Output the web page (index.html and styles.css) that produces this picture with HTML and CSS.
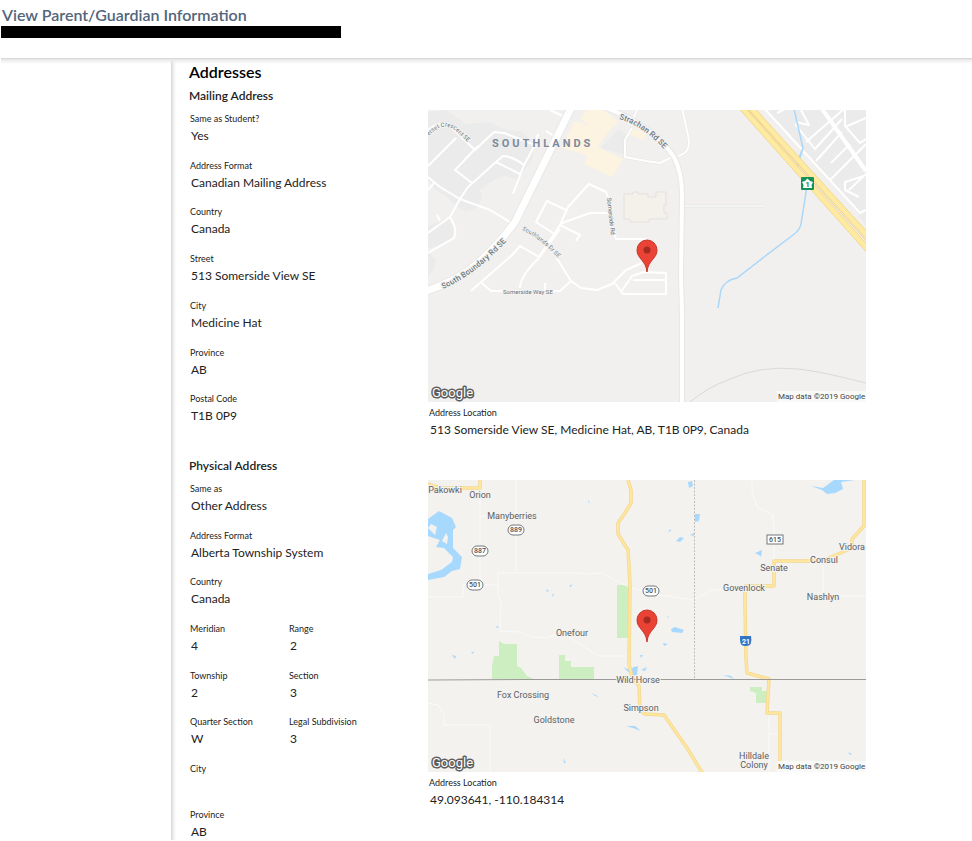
FILE: index.html
```html
<!DOCTYPE html>
<html lang="en">
<head>
<meta charset="utf-8">
<meta name="viewport" content="width=device-width, initial-scale=1">
<title>View Parent/Guardian Information</title>
<link rel="stylesheet" href="styles.css">
</head>
<body>
<header class="page-header">
  <h1>View Parent/Guardian Information</h1>
  <div class="redacted"></div>
</header>
<div class="workspace">
  <aside class="sidebar"></aside>
  <main class="content">
    <h2>Addresses</h2>

    <section class="address">
      <h3>Mailing Address</h3>
      <div class="address-body">
        <dl class="fields mailing">
          <div><dt>Same as Student?</dt><dd>Yes</dd></div>
          <div><dt>Address Format</dt><dd>Canadian Mailing Address</dd></div>
          <div><dt>Country</dt><dd>Canada</dd></div>
          <div><dt>Street</dt><dd>513 Somerside View SE</dd></div>
          <div><dt>City</dt><dd>Medicine Hat</dd></div>
          <div><dt>Province</dt><dd>AB</dd></div>
          <div><dt>Postal Code</dt><dd>T1B 0P9</dd></div>
        </dl>
        <div class="location">
          <svg class="map" viewBox="0 0 438 292" role="img" aria-label="Map of mailing address">
            <defs>
              <path id="strachan" d="M191 9Q217 16 242 46"/>
              <path id="boundary" d="M15 179Q50 164 88 121"/>
              <path id="crescent" d="M1 26Q14 11 27 20L52 44"/>
              <path id="southlands" d="M94 120Q112 128 132 150"/>
            </defs>
            <rect width="438" height="292" fill="#f1f0ee"/>
            <g fill="#ebebeb">
              <path d="M0 2L18 0L38 14L62 12L72 18L95 22L107 35L104 50L98 58L90 70L78 66L66 70L52 80L54 88L48 98L38 102L28 96L20 88L8 80L0 70Z"/>
              <path d="M0 116L20 108L26 118L24 128L10 136L0 138Z"/>
              <path d="M0 142L8 150L6 160L0 166Z"/>
              <path d="M338 0H438V116L430 103Z"/>
              <path d="M190 20L172 38L196 44L200 24Z"/>
            </g>
            <g fill="#fcf3e0">
              <path d="M158 0H176L191 12L182 20L170 36L176 40L195 49L184 67L156 54L160 46L134 38L146 11L160 15L153 8Z"/>
              <path d="M202 18L221 22L215 30L202 25Z"/>
            </g>
            <path d="M196 84H205V82H210V84H220V87H228V82H238V95H236V103H239V109H221V112H202V109H196Z" fill="#f4f1eb" stroke="#e4e1dc"/>
            <g fill="none" stroke="#e6e6e6" stroke-width="3" stroke-linejoin="round">
              <path d="M256 96H336"/>
              <path d="M204 18L197 30V47L218 51M254 -2L260 25Q264 43 250 46M218 51L232 53L246 46M209 0L205 9"/>
            </g>
            <g fill="none" stroke="#fff" stroke-width="2" stroke-linejoin="round">
              <path d="M204 18L197 30V47L218 51M254 -2L260 25Q264 43 250 46M218 51L232 53L246 46M209 0L205 9"/>
              <path d="M0 67L12 77L32 89L62 100L87 115M0 20Q14 8 26 20L47 40L66 22L76 23L107 35L96 55L85 84M107 35L110 24M96 55Q84 46 75 46L68 52L40 77L32 89L22 107L0 123M68 52L92 64M44 73L27 60L50 36M28 28L0 56M7 72L0 80M22 107Q30 120 26 128L0 143M12 111L9 105"/>
              <path d="M122 0L137 7M118 21L129 28"/>
              <path d="M43 181L84 145L92 136L111 147L132 115L140 97L161 74L178 82L181 90M132 115L152 125L148 131M125 123L108 112L119 91L138 100M134 113L162 103H180M181 90L184 116L188 129H219M132 119L110 149Q92 166 92 178M54 173L63 181H132L143 171L128 147M117 173V181M143 171L153 178L169 180L184 174L198 160L214 153M187 173L195 184H238V163L216 162L204 166L193 182M205 170H238"/>
              <path d="M336 -2L432 103L438 100M349 3L359 -2M367 14L387 39L414 9M378 32L417 -2M368 12L381 15L373 0M388 51L414 22M403 53L422 34M417 -2V16L432 33L438 29M417 17L438 8M402 70L438 34M436 66L417 72V80L431 87M421 80L438 64"/>
              <path d="M256 96H337" stroke="#f4f4f2"/>
            </g>
            <path d="M146 -8L87 112Q65 142 40 161Q20 174 -2 181" fill="none" stroke="#e8e8e8" stroke-width="9"/>
            <path d="M146 -8L87 112Q65 142 40 161Q20 174 -2 181" fill="none" stroke="#fff" stroke-width="7"/>
            <path d="M166 -6Q220 10 246 47Q254 63 254 84L253 166L254 206V294" fill="none" stroke="#e6e6e6" stroke-width="6"/>
            <path d="M166 -6Q220 10 246 47Q254 63 254 84L253 166L254 206V294" fill="none" stroke="#fff" stroke-width="4"/>
            <path d="M392 -4L438 61" stroke="#fff" stroke-width="4"/>
            <path d="M366 -1L375 38L370 50M375 38L369 57M379 76L373 114Q372 120 365 125L336 147L309 168Q297 170 293 180L290 198" fill="none" stroke="#aad7fa" stroke-width="1.500"/>
            <g fill="none">
              <path d="M314 -2L442 142M323 -2L442 129" stroke="#efd58a" stroke-width="6"/>
              <path d="M314 -2L442 142M323 -2L442 129" stroke="#ffeaa2" stroke-width="4.500"/>
              <path d="M318.500 -2L442 135" stroke="#f2cf7d"/>
            </g>
            <path d="M262 292Q280 277 300 270Q331 255 370 259Q391 261 438 273" fill="none" stroke="#d9d9d7"/>
            <rect x="373" y="67" width="13" height="13" rx="1" fill="#149257"/>
            <path d="M379.500 68.500L382 71L385 72L383.500 75L384 78H375L375.500 75L374 72L377 71Z" fill="#fff"/>
            <text class="shield-text green" x="379.500" y="77">1</text>
            <g class="map-label street">
              <text class="district" x="64" y="37">SOUTHLANDS</text>
              <text><textPath href="#strachan">Strachan Rd SE</textPath></text>
              <text><textPath href="#boundary">South Boundary Rd SE</textPath></text>
              <g class="minor">
                <text><textPath href="#crescent">erset Crescent SE</textPath></text>
                <text><textPath href="#southlands">Southlands Dr SE</textPath></text>
                <text x="179" y="88" transform="rotate(84 179 88)">Somerside Rd</text>
                <text x="75" y="184">Somerside Way SE</text>
              </g>
            </g>
            <path class="pin" d="M219 162C218 150 209 149 209 140A10 10 0 0 1 229 140C229 149 220 150 219 162Z"/>
            <circle cx="219" cy="140" r="3.500" fill="#a52a21"/>
            <text class="map-logo" x="4" y="287">Google</text>
            <rect x="349" y="281" width="89" height="11" fill="#f9f9f8"/>
            <text class="map-credit" x="350" y="289">Map data ©2019 Google</text>
          </svg>
          <dl class="located">
            <div><dt>Address Location</dt><dd>513 Somerside View SE, Medicine Hat, AB, T1B 0P9, Canada</dd></div>
          </dl>
        </div>
      </div>
    </section>

    <section class="address">
      <h3>Physical Address</h3>
      <div class="address-body">
        <dl class="fields physical">
          <div class="wide"><dt>Same as</dt><dd>Other Address</dd></div>
          <div class="wide"><dt>Address Format</dt><dd>Alberta Township System</dd></div>
          <div class="wide"><dt>Country</dt><dd>Canada</dd></div>
          <div><dt>Meridian</dt><dd>4</dd></div>
          <div><dt>Range</dt><dd>2</dd></div>
          <div><dt>Township</dt><dd>2</dd></div>
          <div><dt>Section</dt><dd>3</dd></div>
          <div><dt>Quarter Section</dt><dd>W</dd></div>
          <div><dt>Legal Subdivision</dt><dd>3</dd></div>
          <div class="wide"><dt>City</dt><dd></dd></div>
          <div class="wide"><dt>Province</dt><dd>AB</dd></div>
        </dl>
        <div class="location">
          <svg class="map" viewBox="0 0 438 292" role="img" aria-label="Map of physical address">
            <rect width="438" height="292" fill="#f3f2ef"/>
            <g fill="#cdeec0">
              <path d="M189 105H201V158H189Z"/>
              <path d="M64 199V186L66 176H71V161L76 164H89V186L93 188L99 196L106 199Z"/>
              <path d="M131 199V175H137V181H143V187H166V199Z"/>
              <path d="M322 207H334V211H339V223H328V213L322 211Z"/>
            </g>
            <g fill="#a7d8fd">
              <path fill-rule="evenodd" d="M0 39L11 31L24 38L28 47L25 50L25 68L34 77L32 89L24 91L16 97L0 100V94L13 90L24 82L25 77L16 68L8 67L12 60L0 56ZM3 44L0 48L7 55L9 47ZM18 53L14 61L19 64L20 57Z"/>
              <path d="M383 6L395 8L402 3L406 0H427L413 2L415 9L407 13L399 14L394 10Z"/>
              <path d="M260 2L264 1L265 6L261 8ZM267 34H272L271 41L267 42ZM248 61L252 57L256 58L252 62ZM262 55L266 53V56ZM240 52L242 49L243 51ZM276 66L280 67ZM327 73L334 70L333 77L331 75Z"/>
              <path d="M243 149L247 147L256 150L254 153L244 152ZM235 163L240 164L236 166ZM195 187L202 190L206 187L210 186L209 195L205 196ZM212 175H215L213 178ZM213 190L219 187L217 191ZM295 195L303 196L306 199Z"/>
              <path d="M24 175L28 176L27 179ZM43 173L46 171L45 174ZM160 20L162 23L160 22ZM118 109L121 111L119 112ZM124 115L126 113L125 117ZM141 106L144 104L143 107ZM122 137L125 139ZM67 147L71 146L70 148ZM164 213L171 217L167 216ZM198 246L207 246L213 251L205 248ZM135 278L138 283L136 283ZM239 136L241 137L240 138ZM261 137L264 138ZM420 272L424 274L422 275Z"/>
            </g>
            <g fill="none" stroke="#fafaf9">
              <path d="M52 0V105H35V117H0M52 36H62M88 0V93M35 105H70V93H152L158 94L173 93L201 107L231 115L266 120L284 110H307M70 105V116L73 122L72 151L92 152L105 157L120 158L132 151L150 163L170 176H201"/>
              <path d="M324 0V12L330 28L344 34L346 45V82M395 85V116M403 116H438M341 236V292M341 254H352M0 223L10 225L16 234V245H62V292"/>
            </g>
            <g fill="none" stroke="#f3d892" stroke-width="3.500" stroke-linejoin="round">
              <path d="M0 4L12 8H52V0M200 0L203 10L203 23L197 33L190 43V54L200 70L202 104L201 184L204 197L211 206L212 231L217 234L236 235L259 268L275 294"/>
              <path d="M436 0V46L424 59V68L394 81H346V106H317V125L318 178L319 193L341 199L339 233H352V292"/>
            </g>
            <g fill="none" stroke="#ffe69c" stroke-width="2" stroke-linejoin="round">
              <path d="M0 4L12 8H52V0M200 0L203 10L203 23L197 33L190 43V54L200 70L202 104L201 184L204 197L211 206L212 231L217 234L236 235L259 268L275 294"/>
              <path d="M436 0V46L424 59V68L394 81H346V106H317V125L318 178L319 193L341 199L339 233H352V292"/>
            </g>
            <path d="M266.500 0V199" stroke="#bdbdbb" stroke-dasharray="2 1.500"/>
            <path d="M0 200L100 199.500H438" fill="none" stroke="#9a9a98"/>
            <g fill="#fff" stroke="#72777b">
              <rect x="80" y="45" width="16" height="10" rx="5"/>
              <rect x="44" y="66" width="16" height="10" rx="5"/>
              <rect x="39" y="100" width="16" height="10" rx="5"/>
              <rect x="215" y="106" width="16" height="10" rx="5"/>
              <rect x="339" y="55" width="16" height="9"/>
            </g>
            <path d="M312 156H323Q325 166 318 166Q311 167 312 156Z" fill="#3574c5"/>
            <g class="shield-text">
              <text x="88" y="52">889</text><text x="52" y="73">887</text><text x="47" y="107">501</text>
              <text x="223" y="113">501</text><text x="347" y="62">615</text>
              <text class="blue" x="318" y="164">21</text>
            </g>
            <g class="map-label town">
              <text x="17" y="13">Pakowki</text><text x="52" y="18">Orion</text><text x="84" y="39">Manyberries</text>
              <text x="144" y="156">Onefour</text><text x="95" y="218">Fox Crossing</text><text x="126" y="243">Goldstone</text>
              <text x="210" y="203">Wild Horse</text><text x="213" y="231">Simpson</text><text x="316" y="111">Govenlock</text>
              <text x="346" y="91">Senate</text><text x="396" y="83">Consul</text><text x="424" y="70">Vidora</text>
              <text x="395" y="120">Nashlyn</text><text x="326" y="279">Hilldale</text><text x="326" y="288">Colony</text>
            </g>
            <path class="pin" d="M219 162C218 150 209 149 209 140A10 10 0 0 1 229 140C229 149 220 150 219 162Z"/>
            <circle cx="219" cy="140" r="3.500" fill="#a52a21"/>
            <text class="map-logo" x="4" y="287">Google</text>
            <rect x="349" y="281" width="89" height="11" fill="#f9f9f8"/>
            <text class="map-credit" x="350" y="289">Map data ©2019 Google</text>
          </svg>
          <dl class="located">
            <div><dt>Address Location</dt><dd>49.093641, -110.184314</dd></div>
          </dl>
        </div>
      </div>
    </section>
  </main>
</div>
</body>
</html>
```
FILE: styles.css
```css
* { box-sizing: border-box; }

body {
  margin: 0;
  height: 100vh;
  padding: 0 0 1px 1px;
  display: flex;
  flex-direction: column;
  background: #fff;
  color: #222;
  font-family: Lato, "Liberation Sans", sans-serif;
  font-size: 12px;
}

h1, h2, h3, dl, dd { margin: 0; }

h1, h2, h3 { font-weight: 600; }

.page-header {
  flex: none;
  height: 58px;
  padding-top: 4px;
}

h1 {
  padding-left: 1px;
  color: #52657d;
  font-size: 16px;
  line-height: 22px;
}

.redacted {
  width: 340px;
  max-width: 100%;
  height: 12px;
  background: #000;
}

.workspace {
  flex: 1;
  min-height: 0;
  display: flex;
}

.sidebar {
  flex: none;
  width: 170px;
  background: linear-gradient(#d4d4d4, #ececec 2px, #fff 6px);
}

.content {
  flex: 1;
  min-width: 0;
  overflow: auto;
  scrollbar-width: none;
  padding: 4px 16px 0 18px;
  background:
    linear-gradient(#d4d4d4, #ececec 2px, transparent 6px),
    linear-gradient(to right, #d4d4d4, #ececec 2px, transparent 5px);
}

h2 {
  margin-bottom: 6px;
  color: #000;
  font-size: 16px;
  line-height: 20px;
}

h3 {
  margin-bottom: 6px;
  font-size: 12px;
  line-height: 16px;
}

.address { margin-bottom: 17px; }
.address:last-child { margin-bottom: 0; }

.address-body {
  display: grid;
  grid-template-columns: 239px minmax(0, 438px);
}

.fields {
  display: grid;
  grid-auto-rows: 1fr;
  padding: 2px 0 0 1px;
}

.mailing { height: 329px; }

.physical {
  height: 375px;
  grid-template-columns: 99px 1fr;
}

.wide { grid-column: 1 / -1; }

dt {
  font-size: 9px;
  line-height: 13px;
}

dd {
  padding-left: 1px;
  line-height: 22px;
}

.map {
  display: block;
  width: 100%;
  font-family: Roboto, sans-serif;
}

.located { padding: 4px 0 0 1px; }

.map-label {
  paint-order: stroke;
  stroke: #f3f2ef;
  stroke-width: 2px;
}

.street {
  fill: #6b7682;
  font-size: 8px;
  font-weight: 500;
}

.district {
  fill: #7d8a9e;
  stroke: none;
  font-size: 11px;
  font-weight: 700;
  letter-spacing: 3px;
}

.minor { font-size: 6px; font-weight: 400; }

.town {
  fill: #5d6064;
  font-size: 9px;
  text-anchor: middle;
}

.shield-text {
  fill: #4c5054;
  font-size: 7px;
  font-weight: 500;
  text-anchor: middle;
}

.green { fill: #149257; font-size: 8px; font-weight: 700; }
.blue { fill: #fff; font-weight: 700; }
.pin { fill: #ea4335; stroke: #c9362b; }

.map-logo {
  fill: #fff;
  stroke: #5c5c5c;
  stroke-width: 3px;
  stroke-linejoin: round;
  paint-order: stroke;
  font-size: 13px;
  font-weight: 400;
}

.map-credit {
  fill: #444;
  font-size: 8px;
}
```
